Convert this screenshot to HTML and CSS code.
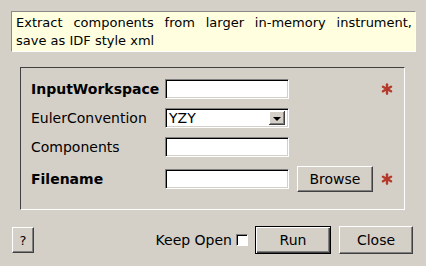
FILE: index.html
```html
<!DOCTYPE html>
<html>
<head>
<meta charset="utf-8">
<link rel="stylesheet" href="styles.css">
</head>
<body>
<div class="dialog">
  <div class="desc">Extract components from larger in-memory instrument, save as IDF style xml</div>
  <div class="group">
    <div class="label bold">InputWorkspace</div>
    <div class="field"></div>
    <div class="extra"></div>
    <div class="star"><svg width="16" height="16" viewBox="0 0 16 16"><g stroke="#b5392b" stroke-width="3.2" stroke-linecap="round"><line x1="8" y1="1.8" x2="8" y2="14.2"/><line x1="2.6" y1="4.9" x2="13.4" y2="11.1"/><line x1="2.6" y1="11.1" x2="13.4" y2="4.9"/></g></svg></div>

    <div class="label">EulerConvention</div>
    <div class="field combo"><span class="val">YZY</span><span class="drop"><span class="tri"></span></span></div>
    <div class="extra"></div>
    <div class="star"></div>

    <div class="label">Components</div>
    <div class="field"></div>
    <div class="extra"></div>
    <div class="star"></div>

    <div class="label bold">Filename</div>
    <div class="field"></div>
    <div class="extra"><div class="btn browse">Browse</div></div>
    <div class="star"><svg width="16" height="16" viewBox="0 0 16 16"><g stroke="#b5392b" stroke-width="3.2" stroke-linecap="round"><line x1="8" y1="1.8" x2="8" y2="14.2"/><line x1="2.6" y1="4.9" x2="13.4" y2="11.1"/><line x1="2.6" y1="11.1" x2="13.4" y2="4.9"/></g></svg></div>
  </div>
  <div class="bottom">
    <div class="btn help">?</div>
    <div class="spacer"></div>
    <div class="keep">Keep Open</div>
    <div class="check"></div>
    <div class="btn run">Run</div>
    <div class="btn close">Close</div>
  </div>
</div>
</body>
</html>
```
FILE: styles.css
```css
html, body {
  margin: 0;
  padding: 0;
  background: #d4d0c8;
}
body {
  width: 426px;
  height: 266px;
  overflow: hidden;
  font-family: "DejaVu Sans", sans-serif;
  font-size: 14px;
  color: #000;
}
.dialog {
  display: flex;
  flex-direction: column;
  padding: 11px 0 0 0;
}
.desc {
  margin-left: 11px;
  width: 396px;
  height: 37px;
  padding: 2px 3px 0 4px;
  background: #ffffe0;
  border-top: 1px solid #8a8a8a;
  border-left: 1px solid #8a8a8a;
  border-right: 1px solid #ffffff;
  border-bottom: 1px solid #ffffff;
  font-size: 13px;
  line-height: 18px;
  text-align: justify;
}
.group {
  margin-top: 15px;
  margin-left: 20px;
  width: 373px;
  height: 131px;
  padding: 10px 0 0 10px;
  border-top: 1px solid #404040;
  border-left: 1px solid #404040;
  border-right: 1px solid #ffffff;
  border-bottom: 1px solid #ffffff;
  display: grid;
  grid-template-columns: 134px 124px 88px 16px;
  grid-template-rows: 22px 22px 22px 26px;
  row-gap: 7px;
  align-items: center;
  align-content: start;
}
.group > div:nth-child(n+13) {
  margin-top: 1px;
}
.label {
  white-space: nowrap;
}
.bold {
  font-weight: bold;
}
.field {
  height: 18px;
  background: #fff;
  border-top: 1px solid #808080;
  border-left: 1px solid #808080;
  border-right: 1px solid #ffffff;
  border-bottom: 1px solid #ffffff;
  box-shadow: inset 1px 1px 0 #000, inset -1px -1px 0 #d4d0c8;
}
.combo {
  display: flex;
  align-items: stretch;
  padding: 2px;
  height: 14px;
}
.combo .val {
  flex: 1;
  line-height: 15px;
  padding-left: 1px;
}
.combo .drop {
  width: 16px;
  background: #d4d0c8;
  box-shadow: inset -1px -1px 0 #404040, inset 1px 1px 0 #ffffff, inset -2px -2px 0 #808080;
  display: flex;
  align-items: center;
  justify-content: center;
  margin-right: 1px;
}
.tri {
  width: 0;
  height: 0;
  border-left: 4px solid transparent;
  border-right: 4px solid transparent;
  border-top: 4px solid #000;
  margin-top: 1px;
}
.extra {
  display: flex;
  padding-left: 8px;
}
.star {
  display: flex;
  align-items: center;
  justify-content: center;
  margin-left: 4px;
}
.btn {
  display: flex;
  align-items: center;
  justify-content: center;
  background: #d4d0c8;
  border-top: 1px solid #ffffff;
  border-left: 1px solid #ffffff;
  border-right: 1px solid #404040;
  border-bottom: 1px solid #404040;
  box-shadow: inset -1px -1px 0 #808080;
  box-sizing: border-box;
}
.browse {
  width: 76px;
  height: 26px;
}
.bottom {
  display: flex;
  align-items: center;
  margin-top: 16px;
  padding: 0 13px 0 12px;
  height: 28px;
}
.help {
  width: 22px;
  height: 26px;
  font-size: 13px;
}
.spacer {
  flex: 1;
}
.keep {
  margin-right: 4px;
}
.check {
  width: 12px;
  height: 12px;
  box-sizing: border-box;
  background: #fff;
  border-top: 1px solid #808080;
  border-left: 1px solid #808080;
  border-right: 1px solid #ffffff;
  border-bottom: 1px solid #ffffff;
  box-shadow: inset 1px 1px 0 #000;
  margin-right: 7px;
}
.run {
  width: 76px;
  height: 28px;
  border: 1px solid #000;
  box-shadow: inset 1px 1px 0 #ffffff, inset -1px -1px 0 #404040, inset -2px -2px 0 #808080;
}
.close {
  width: 74px;
  height: 28px;
  margin-left: 8px;
}
```
